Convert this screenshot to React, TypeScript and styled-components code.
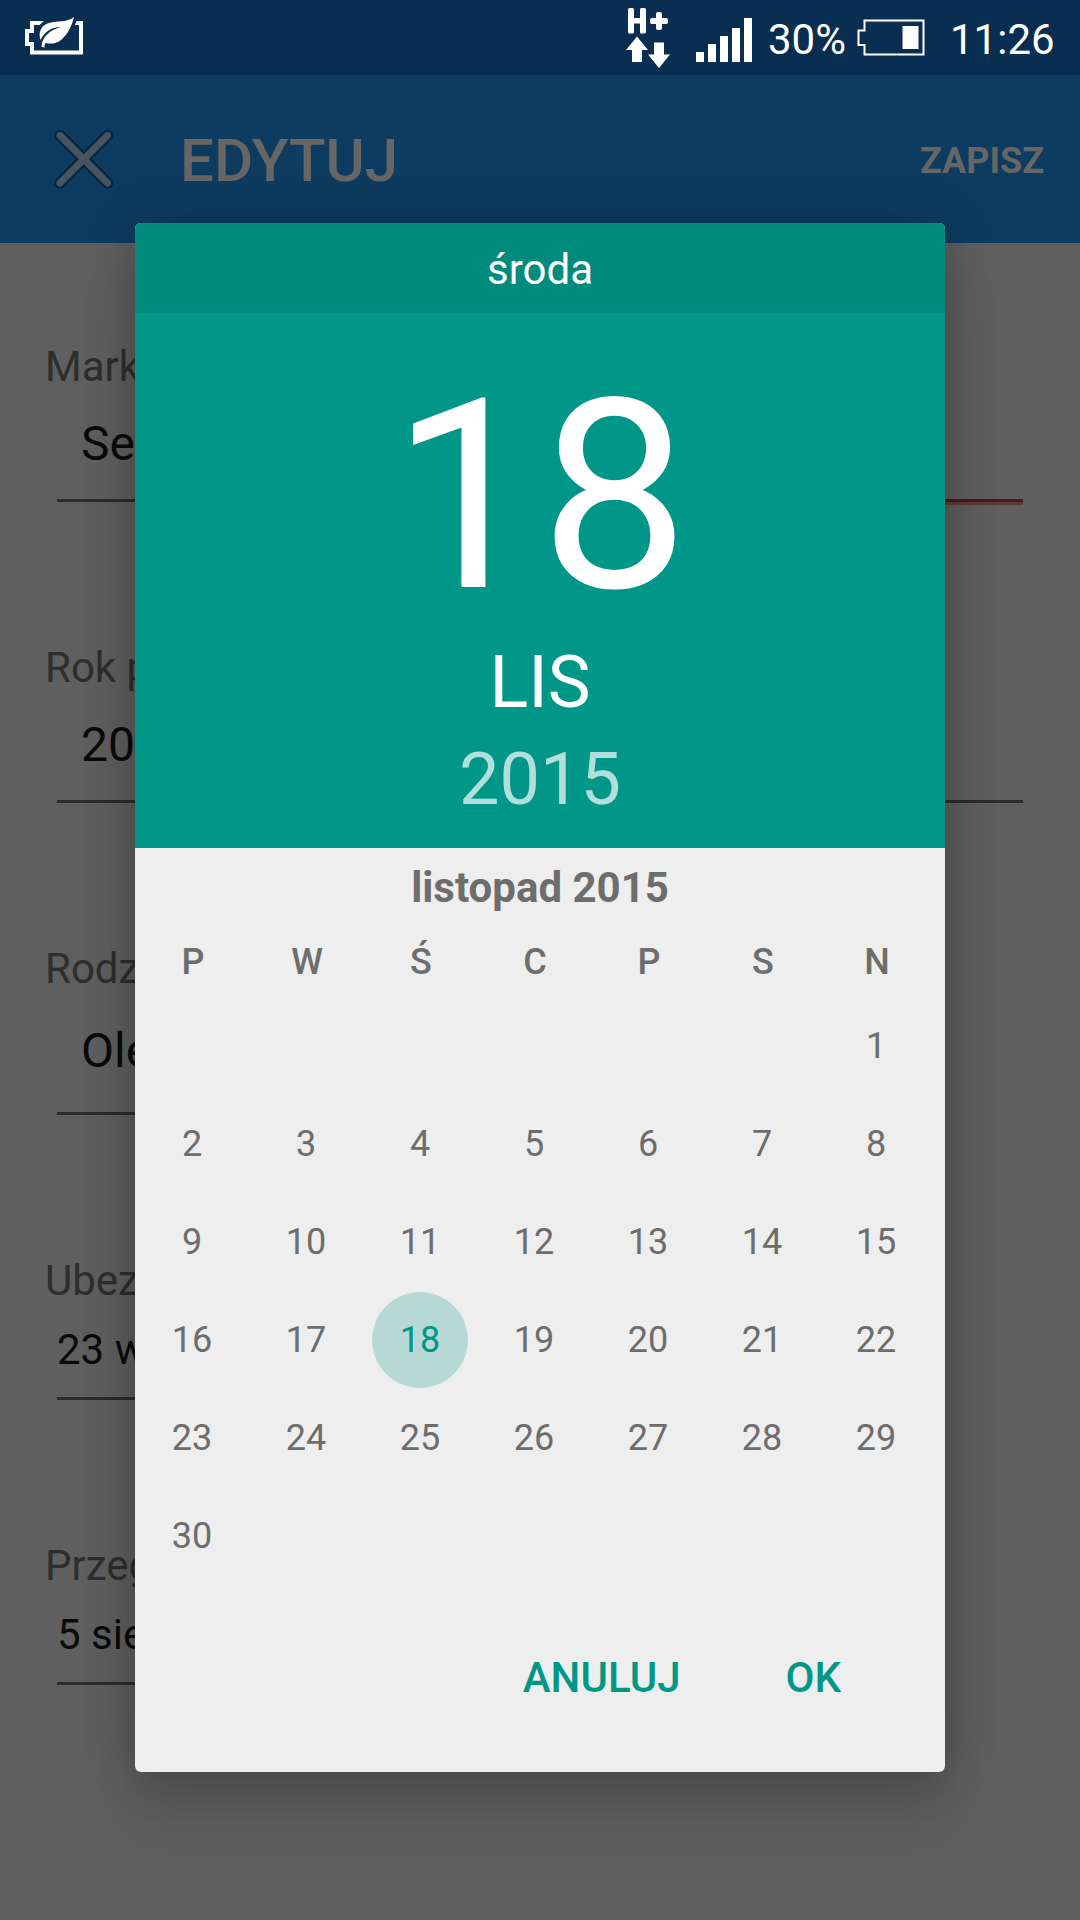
import React from "react";
import styled, { createGlobalStyle } from "styled-components";

const GlobalStyle = createGlobalStyle`
  *, *::before, *::after { box-sizing: border-box; }
  body {
    margin: 0;
    background: #5f5f5f;
    font-family: Roboto, "Noto Sans", sans-serif;
    overflow: hidden;
  }
  button { border: 0; padding: 0; background: none; font-family: inherit; cursor: pointer; }
`;

const Screen = styled.div`
  position: relative;
  width: 1080px;
  height: 1920px;
  display: flex;
  flex-direction: column;
  overflow: hidden;
  background: #5f5f5f;
`;

const StatusBar = styled.header`
  height: 75px;
  padding: 0 25px 0 24px;
  display: flex;
  align-items: flex-start;
  background: #0a2e52;
  color: #fff;
`;

const LeafBattery = styled.svg`
  margin: 16px auto 0 0;
`;

const DataIcon = styled.svg`
  margin-top: 6px;
`;

const SignalIcon = styled.div`
  display: flex;
  align-items: flex-end;
  gap: 4px;
  height: 44px;
  margin: 18px 0 0 25px;
`;

const SignalBar = styled.i<{ $h: number }>`
  width: 8px;
  height: ${(p) => p.$h}px;
  background: #fff;
`;

const StatusText = styled.span<{ $left: number; $w: number }>`
  width: ${(p) => p.$w}px;
  margin-left: ${(p) => p.$left}px;
  padding-top: 15px;
  font-size: 42px;
  line-height: 49px;
  white-space: nowrap;
`;

const BatteryIcon = styled.svg`
  margin: 19px 0 0 0;
`;

const AppBar = styled.div`
  height: 168px;
  padding: 4px 36px 0 54px;
  display: flex;
  align-items: center;
  background: #0d3c60;
  color: #666;
`;

const CloseButton = styled.button`
  display: flex;
  width: 60px;
  height: 60px;
  margin-bottom: 4px;
`;

const Title = styled.h1`
  margin: 0 auto 0 66px;
  font-size: 60px;
  font-weight: 500;
  line-height: 70px;
`;

const SaveButton = styled.button`
  color: #666;
  font-size: 36px;
  font-weight: 700;
  line-height: 42px;
`;

const Form = styled.main`
  flex: 1;
  display: flex;
  flex-direction: column;
  padding: 0 57px 0 45px;
`;

const Field = styled.section<{ $h: number; $top: number }>`
  flex: none;
  height: ${(p) => p.$h}px;
  padding-top: ${(p) => p.$top}px;
  display: flex;
  flex-direction: column;
`;

const Label = styled.label`
  height: 50px;
  font-size: 42px;
  line-height: 50px;
  color: #2e2e2e;
`;

const Value = styled.div<{ $size: number; $indent: number; $gap: number; $after: number; $half?: boolean }>`
  flex: none;
  width: ${(p) => (p.$half ? "600px" : "auto")};
  margin: ${(p) => p.$gap}px 0 0 12px;
  padding: 0 0 ${(p) => p.$after}px ${(p) => p.$indent}px;
  font-size: ${(p) => p.$size}px;
  line-height: 56px;
  color: #0b0b0b;
  border-bottom: 3px solid #2d2d2d;
`;

const ErrorMark = styled.div`
  flex: none;
  align-self: flex-end;
  width: 120px;
  height: 6px;
  margin-top: -3px;
  background: linear-gradient(#421f1f 50%, #613838 50%);
`;

const Dialog = styled.div`
  position: absolute;
  left: 135px;
  top: 223px;
  width: 810px;
  height: 1549px;
  display: flex;
  flex-direction: column;
  overflow: hidden;
  border-radius: 6px;
  background: #eee;
  box-shadow: 0 50px 60px rgba(0, 0, 0, 0.11), 0 0 50px rgba(0, 0, 0, 0.24);
`;

const DayHeader = styled.div`
  height: 90px;
  padding-top: 22px;
  background: #008b7d;
  color: #fff;
  font-size: 42px;
  line-height: 49px;
  text-align: center;
`;

const DateHero = styled.div`
  height: 535px;
  display: flex;
  flex-direction: column;
  align-items: center;
  background: #009788;
  color: #fff;
`;

const HeroDay = styled.div`
  margin-top: 40px;
  font-size: 265px;
  line-height: 288px;
`;

const HeroLine = styled.div<{ $top: number; $faded?: boolean }>`
  margin-top: ${(p) => p.$top}px;
  font-size: 72px;
  line-height: 84px;
  color: ${(p) => (p.$faded ? "#b2dfdb" : "#fff")};
`;

const MonthTitle = styled.h2`
  margin: 15px 0 0;
  font-size: 42px;
  font-weight: 700;
  line-height: 50px;
  color: #6d6d6d;
  text-align: center;
`;

const Week = styled.div<{ $h: number }>`
  display: grid;
  grid-template-columns: repeat(7, 114px);
  height: ${(p) => p.$h}px;
  align-items: center;
  justify-items: center;
`;

const Weekdays = styled(Week)`
  margin: 14px 0 0 1px;
`;

const Weekday = styled.span`
  font-size: 36px;
  font-weight: 500;
  color: #6d6d6d;
`;

const Day = styled.button<{ $selected?: boolean }>`
  width: 96px;
  height: 96px;
  border-radius: 50%;
  font-size: 36px;
  line-height: 96px;
  color: ${(p) => (p.$selected ? "#009788" : "#6d6d6d")};
  background: ${(p) => (p.$selected ? "#b6d9d5" : "transparent")};
`;

const Actions = styled.div`
  display: flex;
  justify-content: flex-end;
  gap: 105px;
  margin-top: 68px;
  padding-right: 104px;
`;

const Action = styled.button`
  color: #009788;
  font-size: 42px;
  font-weight: 500;
  line-height: 50px;
`;

const weeks: (number | null)[][] = [
  [null, null, null, null, null, null, 1],
  [2, 3, 4, 5, 6, 7, 8],
  [9, 10, 11, 12, 13, 14, 15],
  [16, 17, 18, 19, 20, 21, 22],
  [23, 24, 25, 26, 27, 28, 29],
  [30, null, null, null, null, null, null],
];

export default function App() {
  return (
    <>
      <GlobalStyle />
      <Screen>
        <StatusBar>
          <LeafBattery width="60" height="40" viewBox="0 0 60 40">
            <path d="M6 5H20L15.500 9H10V17H5V26H10V34.500H55V9H51L52.500 5H59V38.500H6V30H1V13H6Z" fill="#fff" />
            <path d="M50 1C48 10 43 20 35 25.500C30 28 25 28 21.500 27C20.500 28 20.500 30 20.500 31.500L17.500 31C17.500 27 19 22.500 23 18.500C27 14.500 32 12.500 37 11C29 11 21 14.500 16.500 24C14 16 17 9.500 25 7C34 4.500 42 7 50 1Z" fill="#fff" />
          </LeafBattery>
          <DataIcon width="45" height="64" viewBox="0 0 45 64" fill="#fff">
            <rect x="2" y="2" width="6" height="25.500" rx="1.500" />
            <rect x="14" y="2" width="6" height="25.500" rx="1.500" />
            <rect x="5" y="12" width="12" height="5.500" />
            <rect x="30" y="6" width="6" height="18" rx="2" />
            <rect x="24" y="12" width="18" height="6" rx="2" />
            <path d="M11 30.500L22 44H16V56H6V44H0Z" />
            <path d="M28 36.500H38V48.500H44L33 62L22 48.500H28Z" />
          </DataIcon>
          <SignalIcon>
            {[10, 18, 26, 34, 44].map((h) => (
              <SignalBar key={h} $h={h} />
            ))}
          </SignalIcon>
          <StatusText $left={16} $w={89}>30%</StatusText>
          <BatteryIcon width="68" height="37" viewBox="0 0 68 37">
            <path d="M7.500 1.500H66.500V35.500H7.500V26H1.500V11.500H7.500Z" fill="none" stroke="#fff" strokeWidth="2" />
            <path d="M45.500 7H61.500V30H45.500Z" fill="#fff" />
          </BatteryIcon>
          <StatusText $left={25} $w={105}>11:26</StatusText>
        </StatusBar>
        <AppBar>
          <CloseButton aria-label="Zamknij">
            <svg width="60" height="60" viewBox="0 0 60 60" fill="none" strokeLinecap="round">
              <path d="M6 6.500L53.500 54M53.500 6.500L6 54" stroke="#09253b" strokeWidth="11.500" />
              <path d="M6 6.500L53.500 54M53.500 6.500L6 54" stroke="#465361" strokeWidth="7" />
            </svg>
          </CloseButton>
          <Title>EDYTUJ</Title>
          <SaveButton>ZAPISZ</SaveButton>
        </AppBar>
        <Form>
          <Field $h={259} $top={99}>
            <Label>Mark</Label>
            <Value $size={48} $indent={24} $gap={24} $after={27}>Se</Value>
            <ErrorMark />
          </Field>
          <Field $h={301} $top={141}>
            <Label>Rok p</Label>
            <Value $size={48} $indent={24} $gap={24} $after={27}>20</Value>
          </Field>
          <Field $h={312} $top={141}>
            <Label>Rodz</Label>
            <Value $size={48} $indent={24} $gap={29} $after={33} $half>Ole</Value>
          </Field>
          <Field $h={285} $top={141}>
            <Label>Ubez</Label>
            <Value $size={42} $indent={0} $gap={16} $after={19} $half>23 w</Value>
          </Field>
          <Field $h={285} $top={141}>
            <Label>Przeg</Label>
            <Value $size={42} $indent={0} $gap={16} $after={19} $half>5 sie</Value>
          </Field>
        </Form>
        <Dialog role="dialog">
          <DayHeader>środa</DayHeader>
          <DateHero>
            <HeroDay>18</HeroDay>
            <HeroLine $top={0}>LIS</HeroLine>
            <HeroLine $top={13} $faded>2015</HeroLine>
          </DateHero>
          <MonthTitle>listopad 2015</MonthTitle>
          <Weekdays $h={70}>
            {["P", "W", "Ś", "C", "P", "S", "N"].map((d, i) => (
              <Weekday key={i}>{d}</Weekday>
            ))}
          </Weekdays>
          {weeks.map((week, i) => (
            <Week key={i} $h={98}>
              {week.map((d, j) =>
                d === null ? <span key={j} /> : <Day key={j} $selected={d === 18}>{d}</Day>
              )}
            </Week>
          ))}
          <Actions>
            <Action>ANULUJ</Action>
            <Action>OK</Action>
          </Actions>
        </Dialog>
      </Screen>
    </>
  );
}
